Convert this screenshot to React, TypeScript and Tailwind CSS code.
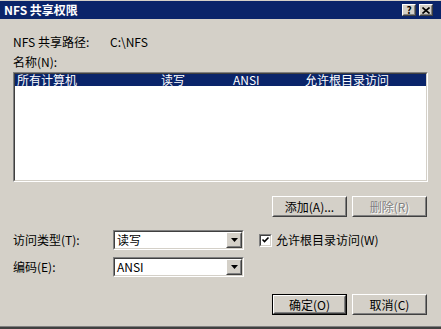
import React from "react";

const font = "font-['Noto_Sans_CJK_SC','Noto_Sans',sans-serif]";

// classic 3D edges
const Raised = ({ className = "", children }: { className?: string; children?: React.ReactNode }) => (
  <div className={`border border-t-white border-l-white border-b-[#404040] border-r-[#404040] ${className}`}>
    <div className="w-full h-full border border-t-[#d4d0c8] border-l-[#d4d0c8] border-b-[#808080] border-r-[#808080] bg-[#d4d0c8] flex items-center justify-center">
      {children}
    </div>
  </div>
);

const Sunken = ({ className = "", children }: { className?: string; children?: React.ReactNode }) => (
  <div className={`border border-t-[#808080] border-l-[#808080] border-b-white border-r-white ${className}`}>
    <div className="w-full h-full border border-t-[#404040] border-l-[#404040] border-b-[#d4d0c8] border-r-[#d4d0c8] bg-white relative">
      {children}
    </div>
  </div>
);

const Button = ({ label, disabled = false, isDefault = false }: { label: string; disabled?: boolean; isDefault?: boolean }) => {
  const text = disabled ? (
    <span className="text-[#808080] [text-shadow:1px_1px_0_#ffffff]">{label}</span>
  ) : (
    <span>{label}</span>
  );
  if (isDefault) {
    return (
      <div className="w-[75px] h-[21px] border border-black">
        <Raised className="w-full h-full">{text}</Raised>
      </div>
    );
  }
  return <Raised className="w-[75px] h-[21px]">{text}</Raised>;
};

const Combo = ({ value }: { value: string }) => (
  <Sunken className="w-[131px] h-[20px]">
    <div className="flex h-full items-center">
      <span className="pl-[2px] grow leading-[12px]">{value}</span>
      <Raised className="w-[16px] h-[16px]">
        <svg width="7" height="4" viewBox="0 0 7 4">
          <path d="M0 0h7L3.5 4z" fill="#000" />
        </svg>
      </Raised>
    </div>
  </Sunken>
);

export default function App() {
  return (
    <div className={`w-[441px] h-[329px] overflow-hidden bg-[#d4d0c8] flex flex-col text-[12px] text-black ${font}`}>
      {/* title bar */}
      <div className="mt-[1px] h-[18px] bg-[#0a246a] flex items-center justify-between pl-[4px] pr-[8px]">
        <span className="text-white font-bold leading-[12px]">NFS 共享权限</span>
        <div className="flex gap-[3px]">
          <Raised className="w-[14px] h-[12px]">
            <span className="text-[10px] font-bold leading-[10px]">?</span>
          </Raised>
          <Raised className="w-[14px] h-[12px]">
            <svg width="8" height="7" viewBox="0 0 8 7">
              <path d="M0.5 0.5l7 6M7.5 0.5l-7 6" stroke="#000" strokeWidth="1.6" />
            </svg>
          </Raised>
        </div>
      </div>

      <div className="flex flex-col grow px-[13px]">
        <div className="mt-[17px] flex leading-[12px]">
          <span className="w-[97px]">NFS 共享路径:</span>
          <span>C:\NFS</span>
        </div>
        <div className="mt-[8px] leading-[12px]">名称(N):</div>

        <Sunken className="mt-[4px] w-[415px] h-[110px]">
          <div className="h-[12px] bg-[#0a246a] text-white grid grid-cols-[144px_72px_72px_1fr] pl-[2px] leading-[12px] items-center">
            <span>所有计算机</span>
            <span>读写</span>
            <span>ANSI</span>
            <span>允许根目录访问</span>
          </div>
        </Sunken>

        <div className="mt-[14px] mr-[1px] flex justify-end gap-[5px]">
          <Button label="添加(A)..." />
          <Button label="删除(R)" disabled />
        </div>

        <div className="mt-[13px] flex items-center">
          <span className="w-[100px] leading-[12px]">访问类型(T):</span>
          <Combo value="读写" />
          <Sunken className="ml-[15px] w-[13px] h-[13px]">
            <svg width="9" height="9" viewBox="0 0 9 9" className="absolute left-0 top-0">
              <path d="M1.5 3.5l2 2 4-4" stroke="#000" strokeWidth="1.6" fill="none" />
            </svg>
          </Sunken>
          <span className="ml-[4px] leading-[12px]">允许根目录访问(W)</span>
        </div>

        <div className="mt-[7px] flex items-center">
          <span className="w-[100px] leading-[12px]">编码(E):</span>
          <Combo value="ANSI" />
        </div>

        <div className="mt-[17px] mr-[1px] flex justify-end gap-[5px]">
          <Button label="确定(O)" isDefault />
          <Button label="取消(C)" />
        </div>
      </div>

      <div className="h-[1px] bg-[#808080]" />
      <div className="h-[2px] bg-[#404040]" />
    </div>
  );
}
